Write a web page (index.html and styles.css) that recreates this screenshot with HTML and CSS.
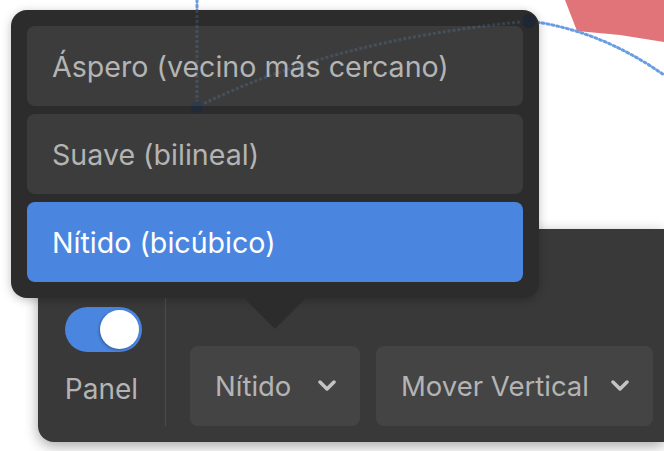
FILE: index.html
```html
<!DOCTYPE html>
<html lang="es">
<head>
    <meta charset="UTF-8">
    <meta name="viewport" content="width=device-width, initial-scale=1.0">
    <link rel="stylesheet" href="styles.css">
    <title>Remuestreo</title>
</head>
<body>
    <!-- dibujo del lienzo detrás de la interfaz -->
    <svg class="canvas" width="664" height="451" viewBox="0 0 664 451">
        <polygon points="565,0 664,0 664,42 620,35 577,31" fill="#e07479"/>
        <path class="guide" d="M197 0 V107 Q330 40 529 21 Q600 30 664 75"/>
        <circle cx="529" cy="21" r="6" fill="#5b8fd6"/>
    </svg>

    <div class="toolbar">
        <div class="toggle-group">
            <div class="switch on"><span class="knob"></span></div>
            <span class="toggle-label">Panel</span>
        </div>
        <div class="divider"></div>
        <div class="controls">
            <button class="select select-small">Nítido
                <svg class="chevron" width="18" height="12" viewBox="0 0 18 12"><path d="M2 2 L9 9 L16 2"/></svg>
            </button>
            <button class="select select-wide">Mover Vertical
                <svg class="chevron" width="18" height="12" viewBox="0 0 18 12"><path d="M2 2 L9 9 L16 2"/></svg>
            </button>
        </div>
    </div>

    <div class="menu">
        <svg class="menu-see" width="528" height="288" viewBox="11 10 528 288">
            <path class="guide-dim" d="M197 0 V107 Q330 40 529 21"/>
            <circle cx="197" cy="107" r="6" fill="#202a38"/>
            <circle cx="529" cy="21" r="7" fill="#1f2733"/>
        </svg>
        <div class="menu-item">Áspero (vecino más cercano)</div>
        <div class="menu-item">Suave (bilineal)</div>
        <div class="menu-item selected">Nítido (bicúbico)</div>
        <span class="menu-arrow"></span>
    </div>
</body>
</html>
```

FILE: styles.css
```css
html, body {
    margin: 0;
    width: 664px;
    height: 451px;
    overflow: hidden;
}

body {
    position: relative;
    background-color: #fff;
    font-family: 'Inter', 'Roboto', sans-serif;
    padding: 229px 0 0 38px;
    box-sizing: border-box;
}

.canvas {
    position: absolute;
    top: 0;
    left: 0;
}

.guide {
    fill: none;
    stroke: #6a9de2;
    stroke-width: 3;
    stroke-dasharray: 2 3;
    stroke-linecap: round;
}

.toolbar {
    position: relative;
    height: 213px;
    background-color: #393939;
    border-radius: 16px 0 0 16px;
    box-shadow: 0 4px 14px rgba(0, 0, 0, 0.35);
    display: flex;
    align-items: flex-end;
    padding-bottom: 16px;
    box-sizing: border-box;
}

.toggle-group {
    width: 127px;
    display: flex;
    flex-direction: column;
    align-items: center;
    padding-bottom: 20px;
}

.switch {
    width: 77px;
    height: 45px;
    border-radius: 23px;
    background-color: #4a86df;
    position: relative;
    margin: 0 0 20px 4px;
}

.knob {
    position: absolute;
    top: 3px;
    right: 3px;
    width: 39px;
    height: 39px;
    border-radius: 50%;
    background-color: #fff;
    box-shadow: -1px 1px 3px rgba(0, 0, 0, 0.3);
}

.toggle-label {
    color: #b4b4b4;
    font-size: 28px;
    line-height: 34px;
}

.divider {
    width: 1px;
    align-self: stretch;
    margin-top: 60px;
    background-color: #4c4c4c;
}

.controls {
    display: flex;
    gap: 16px;
    padding-left: 24px;
}

.select {
    height: 80px;
    border: none;
    border-radius: 8px;
    background-color: #444;
    color: #b4b4b4;
    font-family: inherit;
    font-size: 27.5px;
    display: flex;
    align-items: center;
    justify-content: space-between;
    padding: 0 24px 0 25px;
    box-sizing: border-box;
}

.select-small {
    width: 170px;
}

.select-wide {
    width: 277px;
}

.chevron path {
    fill: none;
    stroke: #c4c4c4;
    stroke-width: 3.5;
    stroke-linecap: round;
    stroke-linejoin: round;
}

.menu {
    position: absolute;
    top: 10px;
    left: 11px;
    width: 528px;
    height: 288px;
    box-sizing: border-box;
    padding: 16px;
    display: flex;
    flex-direction: column;
    gap: 8px;
    background-color: #2c2c2c;
    border-radius: 16px;
    box-shadow: 0 2px 10px rgba(0, 0, 0, 0.25);
}

.menu-see {
    position: absolute;
    top: 0;
    left: 0;
    border-radius: 16px;
}

.guide-dim {
    fill: none;
    stroke: #37414f;
    stroke-width: 3;
    stroke-dasharray: 3 2;
}

.menu-item {
    position: relative;
    height: 80px;
    border-radius: 8px;
    background-color: rgba(255, 255, 255, 0.08);
    color: #b4b4b4;
    font-size: 28.6px;
    display: flex;
    align-items: center;
    padding-left: 25px;
}

.menu-item.selected {
    background-color: #4a86df;
    color: #fff;
}

.menu-arrow {
    position: absolute;
    top: 100%;
    left: 233px;
    width: 0;
    height: 0;
    border-left: 31px solid transparent;
    border-right: 31px solid transparent;
    border-top: 31px solid #2c2c2c;
}
```
